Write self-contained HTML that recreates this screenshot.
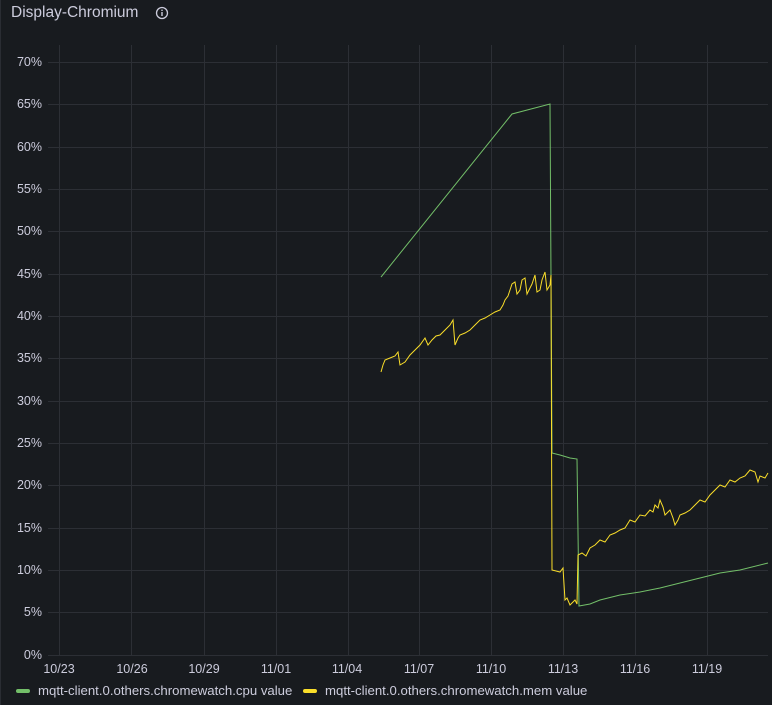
<!DOCTYPE html>
<html><head><meta charset="utf-8"><style>
body{margin:0;background:#181b1f;width:772px;height:705px;overflow:hidden;font-family:"Liberation Sans",sans-serif;}
.t{position:absolute;left:11px;top:4px;color:#ccccdc;font-size:15.5px;font-weight:500}
.lg{position:absolute;top:683px;font-size:13.2px;color:#ccccdc;white-space:nowrap}
.sw{display:inline-block;width:14px;height:4px;border-radius:2px;vertical-align:middle;margin-right:8px;position:relative;top:-1px}
</style></head><body>
<div style="position:absolute;left:0;top:0;width:1px;height:705px;background:#2a2d33"></div>
<div class="t">Display-Chromium</div>
<svg style="position:absolute;left:155px;top:6px" width="14" height="14" viewBox="0 0 14 14"><circle cx="7" cy="7" r="5.5" fill="none" stroke="#ccccdc" stroke-width="1.3"/><rect x="6.3" y="6" width="1.4" height="4" fill="#ccccdc"/><rect x="6.3" y="3.6" width="1.4" height="1.4" fill="#ccccdc"/></svg>
<svg style="position:absolute;left:0;top:0" width="772" height="705">
<g stroke="#2c2f35" stroke-width="1">
<line x1="48" y1="62.5" x2="768" y2="62.5"/><line x1="48" y1="104.5" x2="768" y2="104.5"/><line x1="48" y1="147.5" x2="768" y2="147.5"/><line x1="48" y1="189.5" x2="768" y2="189.5"/><line x1="48" y1="231.5" x2="768" y2="231.5"/><line x1="48" y1="274.5" x2="768" y2="274.5"/><line x1="48" y1="316.5" x2="768" y2="316.5"/><line x1="48" y1="358.5" x2="768" y2="358.5"/><line x1="48" y1="401.5" x2="768" y2="401.5"/><line x1="48" y1="443.5" x2="768" y2="443.5"/><line x1="48" y1="485.5" x2="768" y2="485.5"/><line x1="48" y1="528.5" x2="768" y2="528.5"/><line x1="48" y1="570.5" x2="768" y2="570.5"/><line x1="48" y1="612.5" x2="768" y2="612.5"/><line x1="48" y1="655.5" x2="768" y2="655.5"/>
<line x1="59.5" y1="45" x2="59.5" y2="655"/><line x1="131.5" y1="45" x2="131.5" y2="655"/><line x1="204.5" y1="45" x2="204.5" y2="655"/><line x1="276.5" y1="45" x2="276.5" y2="655"/><line x1="348.5" y1="45" x2="348.5" y2="655"/><line x1="419.5" y1="45" x2="419.5" y2="655"/><line x1="491.5" y1="45" x2="491.5" y2="655"/><line x1="563.5" y1="45" x2="563.5" y2="655"/><line x1="635.5" y1="45" x2="635.5" y2="655"/><line x1="707.5" y1="45" x2="707.5" y2="655"/>
</g>
<g fill="#ccccdc" font-size="12.5" text-anchor="end" font-family="Liberation Sans,sans-serif">
<text x="42" y="66">70%</text><text x="42" y="108">65%</text><text x="42" y="151">60%</text><text x="42" y="193">55%</text><text x="42" y="235">50%</text><text x="42" y="278">45%</text><text x="42" y="320">40%</text><text x="42" y="362">35%</text><text x="42" y="405">30%</text><text x="42" y="447">25%</text><text x="42" y="489">20%</text><text x="42" y="532">15%</text><text x="42" y="574">10%</text><text x="42" y="616">5%</text><text x="42" y="659">0%</text>
</g>
<g fill="#ccccdc" font-size="12.5" text-anchor="middle" font-family="Liberation Sans,sans-serif">
<text x="59" y="673">10/23</text><text x="132" y="673">10/26</text><text x="204" y="673">10/29</text><text x="276" y="673">11/01</text><text x="347" y="673">11/04</text><text x="419" y="673">11/07</text><text x="491" y="673">11/10</text><text x="563" y="673">11/13</text><text x="635" y="673">11/16</text><text x="707" y="673">11/19</text>
</g>
<polyline fill="none" stroke="#73bf69" stroke-width="1" points="381,277 512,114 550,104 552,453 560,455 570,458 577,459 579,606 590,604 600,600 620,595 640,592 660,588 680,583 700,578 720,573 740,570 768,563"/>
<polyline fill="none" stroke="#fade2a" stroke-width="1" points="381,372 383,365 385,360 390,358 395,356 398,352 400,365 405,362 410,355 415,350 420,345 425,338 428,345 432,340 436,336 440,335 445,330 450,325 453,320 455,345 458,338 460,335 465,333 470,330 475,325 480,320 485,318 490,315 495,312 500,310 503,305 505,300 508,296 510,290 512,284 515,282 517,294 520,290 522,280 525,278 527,294 530,288 532,284 535,275 537,292 540,290 542,280 545,272 547,290 550,285 551,275 552,570 556,571 560,572 563,568 565,600 567,598 570,605 573,602 575,600 577,604 578,555 582,553 586,556 590,548 595,545 600,540 605,542 610,535 615,533 620,530 625,528 630,520 635,522 640,515 645,516 650,510 653,512 655,505 658,508 660,500 663,507 665,515 668,512 670,510 673,518 675,525 678,520 680,515 685,513 690,510 695,505 700,500 705,502 710,495 715,490 720,485 725,487 730,480 735,482 740,478 745,476 750,470 755,472 758,482 760,476 765,478 768,473"/>
</svg>
<div class="lg" style="left:16px"><span class="sw" style="background:#73bf69"></span>mqtt-client.0.others.chromewatch.cpu value</div>
<div class="lg" style="left:303px"><span class="sw" style="background:#fade2a"></span>mqtt-client.0.others.chromewatch.mem value</div>
</body></html>
